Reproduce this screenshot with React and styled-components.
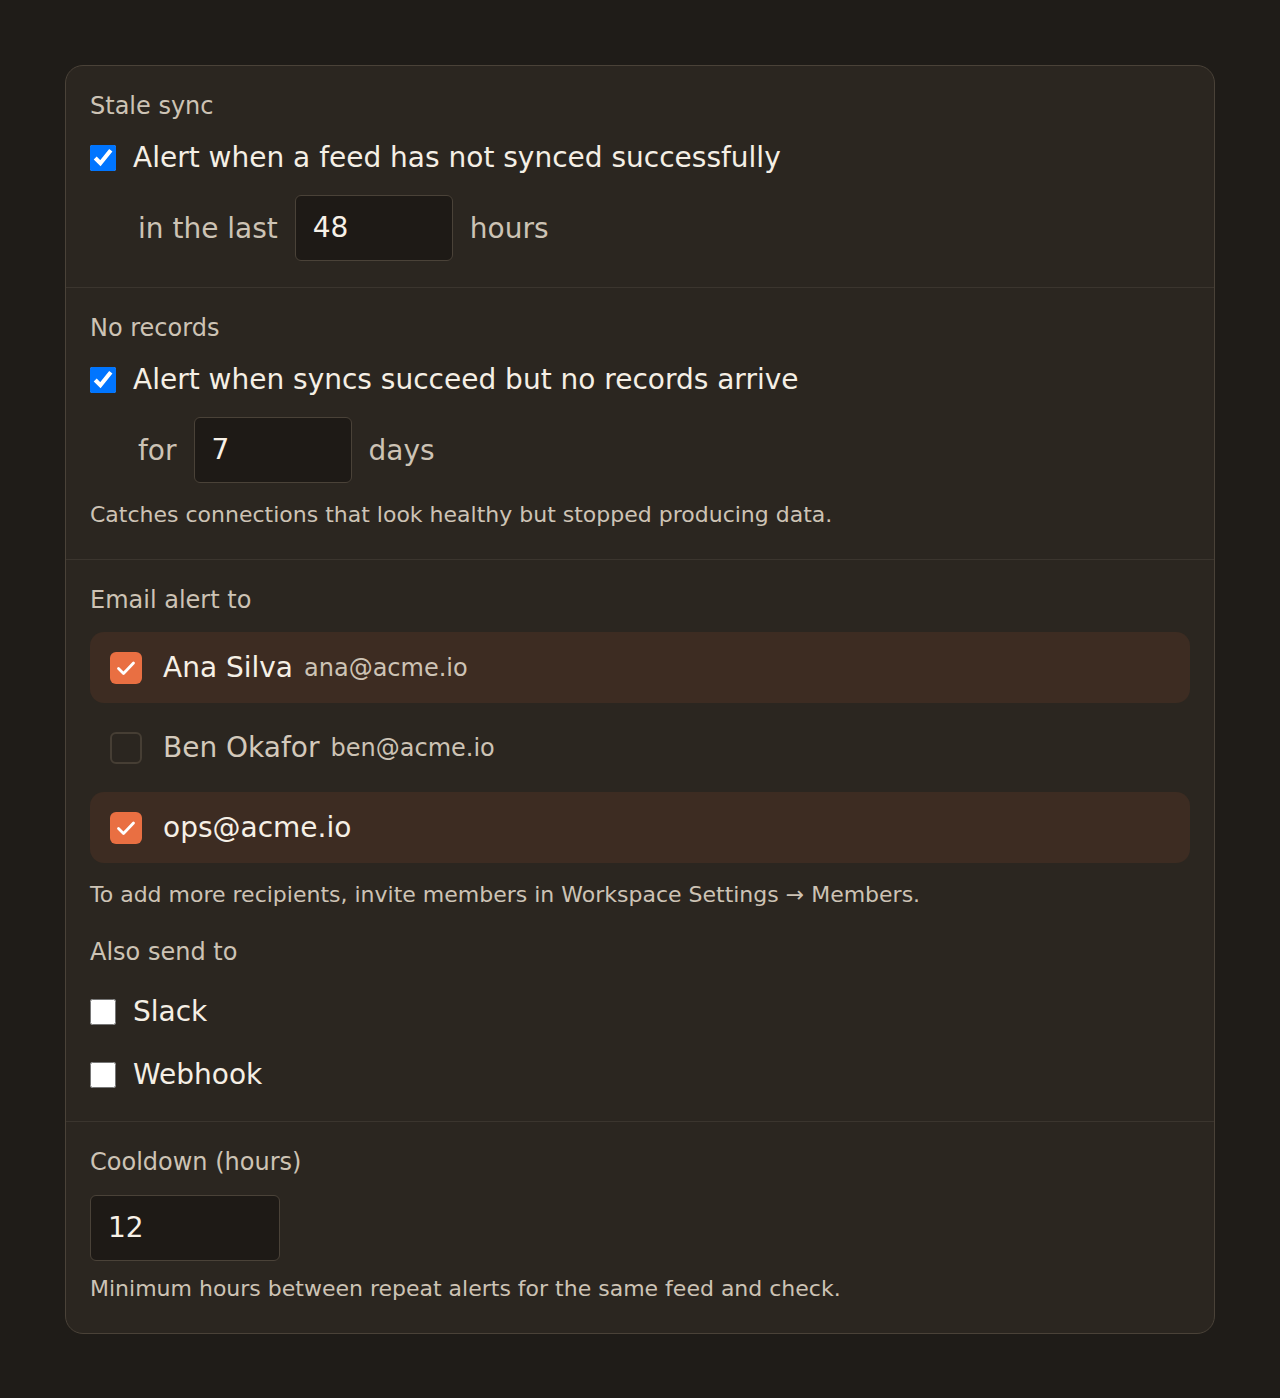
import styled, { createGlobalStyle } from 'styled-components';

const GlobalStyle = createGlobalStyle`
  body {
    margin: 0;
    background: #1f1c18;
    font-family: "DejaVu Sans", "Liberation Sans", sans-serif;
    color: #f3ede3;
  }
`;

const Page = styled.div`
  padding: 65px 65px 64px;
`;

const Card = styled.div`
  background: #2b2620;
  border: 1px solid #4a4238;
  border-radius: 18px;
  overflow: hidden;
`;

const Section = styled.section`
  display: flex;
  flex-direction: column;
  padding: 23px 24px ${(p) => p.$bottom || 26}px;
  border-top: ${(p) => (p.$first ? 'none' : '1px solid #3b352e')};
`;

const Label = styled.div`
  font-size: 24px;
  line-height: 34px;
  color: #cdc3b5;
  margin-top: ${(p) => p.$top || 0}px;
`;

const CheckRow = styled.label`
  display: flex;
  align-items: center;
  gap: 17px;
  font-size: 28px;
  line-height: 40px;
  color: #f5efe5;
  margin-top: ${(p) => p.$top || 0}px;
`;

const NativeBox = styled.input.attrs({ type: 'checkbox' })`
  width: 26px;
  height: 26px;
  margin: 0;
  flex: none;
`;

const InlineRow = styled.div`
  display: flex;
  align-items: center;
  gap: 17px;
  margin: 17px 0 1px 48px;
  font-size: 28px;
  color: #cdc3b5;
`;

const NumberBox = styled.div`
  box-sizing: border-box;
  width: ${(p) => p.$w || 158}px;
  height: 66px;
  padding: 0 17px 2px;
  display: flex;
  align-items: center;
  background: #1e1a16;
  border: 1px solid #4a4238;
  border-radius: 6px;
  font-size: 28px;
  color: #f7f1e8;
  margin-top: ${(p) => p.$top || 0}px;
`;

const Hint = styled.p`
  margin: ${(p) => p.$top || 15}px 0 0;
  font-size: 22px;
  line-height: 32px;
  color: #cdc3b5;
`;

const Recipients = styled.div`
  display: flex;
  flex-direction: column;
  gap: 9px;
  margin-top: 15px;
`;

const Recipient = styled.div`
  display: flex;
  align-items: center;
  gap: 21px;
  height: 71px;
  padding: 0 20px;
  border-radius: 14px;
  background: ${(p) => (p.$on ? '#3d2c22' : 'transparent')};
`;

const Box = styled.span`
  box-sizing: border-box;
  flex: none;
  width: 32px;
  height: 32px;
  border-radius: 6px;
  display: flex;
  align-items: center;
  justify-content: center;
  background: ${(p) => (p.$on ? '#e96f42' : 'transparent')};
  border: ${(p) => (p.$on ? 'none' : '2px solid #463e34')};
`;

const Name = styled.span`
  font-size: 28px;
  color: ${(p) => (p.$on ? '#f6f0e6' : '#d3c9bb')};
`;

const Email = styled.span`
  font-size: 24px;
  color: #cdc3b5;
  margin-left: -10px;
`;

const Channels = styled.div`
  display: flex;
  flex-direction: column;
  gap: 23px;
  margin-top: 23px;
`;

function Check() {
  return (
    <svg width="24" height="24" viewBox="0 0 24 24" fill="none">
      <path d="M4.5 12.5l5 5 10-10.5" stroke="#fff" strokeWidth="2.8" strokeLinecap="round" strokeLinejoin="round" />
    </svg>
  );
}

const recipients = [
  { name: 'Ana Silva', email: 'ana@acme.io', on: true },
  { name: 'Ben Okafor', email: 'ben@acme.io', on: false },
  { name: 'ops@acme.io', on: true },
];

export default function App() {
  return (
    <>
      <GlobalStyle />
      <Page>
        <Card>
          <Section $first $bottom={25}>
            <Label>Stale sync</Label>
            <CheckRow $top={15}>
              <NativeBox defaultChecked />
              Alert when a feed has not synced successfully
            </CheckRow>
            <InlineRow>
              in the last
              <NumberBox>48</NumberBox>
              hours
            </InlineRow>
          </Section>

          <Section $bottom={28}>
            <Label>No records</Label>
            <CheckRow $top={15}>
              <NativeBox defaultChecked />
              Alert when syncs succeed but no records arrive
            </CheckRow>
            <InlineRow>
              for
              <NumberBox>7</NumberBox>
              days
            </InlineRow>
            <Hint $top={15}>Catches connections that look healthy but stopped producing data.</Hint>
          </Section>

          <Section $bottom={26}>
            <Label>Email alert to</Label>
            <Recipients>
              {recipients.map((r) => (
                <Recipient key={r.name} $on={r.on}>
                  <Box $on={r.on}>{r.on && <Check />}</Box>
                  <Name $on={r.on}>{r.name}</Name>
                  {r.email && <Email>{r.email}</Email>}
                </Recipient>
              ))}
            </Recipients>
            <Hint $top={16}>To add more recipients, invite members in Workspace Settings → Members.</Hint>
            <Label $top={24}>Also send to</Label>
            <Channels>
              <CheckRow>
                <NativeBox />
                Slack
              </CheckRow>
              <CheckRow>
                <NativeBox />
                Webhook
              </CheckRow>
            </Channels>
          </Section>

          <Section $bottom={28}>
            <Label>Cooldown (hours)</Label>
            <NumberBox $w={190} $top={16}>12</NumberBox>
            <Hint $top={12}>Minimum hours between repeat alerts for the same feed and check.</Hint>
          </Section>
        </Card>
      </Page>
    </>
  );
}
